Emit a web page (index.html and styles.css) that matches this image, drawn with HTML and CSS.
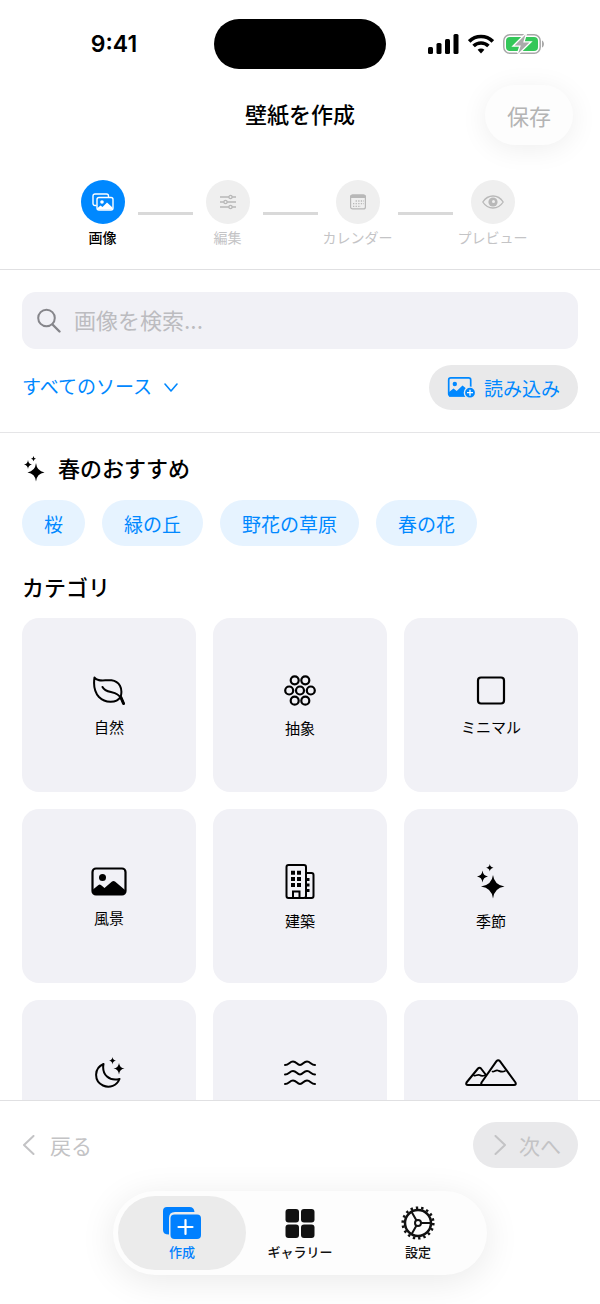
FILE: index.html
```
<!DOCTYPE html>
<html lang="ja">
<head>
    <meta charset="UTF-8">
    <meta name="viewport" content="width=device-width, initial-scale=1.0">
    <title>壁紙を作成</title>
    <link rel="stylesheet" href="styles.css">
</head>
<body>
    <header>
        <div class="status-bar">
            <div class="time">9:41</div>
            <div class="island"></div>
            <div class="status-icons">
                <svg width="31" height="20" viewBox="0 0 31 20">
                    <rect x="0" y="13" width="5" height="7" rx="1.5"/>
                    <rect x="8.5" y="9" width="5" height="11" rx="1.5"/>
                    <rect x="17" y="5" width="5" height="15" rx="1.5"/>
                    <rect x="25.5" y="0" width="5" height="20" rx="1.5"/>
                </svg>
                <svg width="26" height="20" viewBox="0 0 26 20" fill="none" stroke="#000" stroke-width="3.6">
                    <path d="M1.2 7.4a16.8 16.8 0 0 1 23.6 0"/>
                    <path d="M5.6 12a10.6 10.6 0 0 1 14.8 0"/>
                    <path d="M13 19.4l-3.4-3.6a4.9 4.9 0 0 1 6.8 0z" fill="#000" stroke="none"/>
                </svg>
                <svg width="42" height="20" viewBox="0 0 42 20">
                    <rect x="0.8" y="0.8" width="36.4" height="18.4" rx="6" fill="none" stroke="#a8a8a8" stroke-width="1.5"/>
                    <rect x="3" y="3" width="32" height="14" rx="4" fill="#34c759"/>
                    <path d="M39 6.5c2.6 1 2.6 6 0 7z" fill="#a8a8a8"/>
                    <path d="M22.5 0.5L11.5 11.5h6.3l-2.6 8L26.5 8.500h-6.3z" fill="#aaa" stroke="#fff" stroke-width="2.6" paint-order="stroke"/>
                </svg>
            </div>
        </div>
        <div class="nav-bar">
            <h1>壁紙を作成</h1>
            <button class="save" disabled>保存</button>
        </div>
        <ol class="steps">
            <li class="step active">
                <span class="circle">
                    <svg width="22" height="18" viewBox="0 0 22 18" fill="none" stroke="currentColor" stroke-width="1.4">
                        <path d="M4.5 12.5H3a2 2 0 0 1-2-2V3a2 2 0 0 1 2-2h11.5a2 2 0 0 1 2 2v1"/>
                        <rect x="5" y="4.5" width="16" height="12.5" rx="2"/>
                        <circle cx="10" cy="9" r="1.8" fill="currentColor" stroke="none"/>
                        <path d="M5.5 15l3-2.5 2 1.5L15 9.5l5.5 5v2h-15z" fill="currentColor" stroke="none"/>
                    </svg>
                </span>
                <span class="step-label">画像</span>
            </li>
            <li class="line"></li>
            <li class="step">
                <span class="circle">
                    <svg width="18" height="16" viewBox="0 0 18 16" fill="none" stroke="currentColor" stroke-width="1.3">
                        <path d="M1 3h9M13 3h4M1 8h4M8 8h9M1 13h9M13 13h4"/>
                        <circle cx="11.5" cy="3" r="1.6"/>
                        <circle cx="6.5" cy="8" r="1.6"/>
                        <circle cx="11.5" cy="13" r="1.6"/>
                    </svg>
                </span>
                <span class="step-label">編集</span>
            </li>
            <li class="line"></li>
            <li class="step">
                <span class="circle">
                    <svg width="18" height="16" viewBox="0 0 18 16">
                        <rect x="1.6" y="1.1" width="14.8" height="13.8" rx="2" fill="none" stroke="currentColor" stroke-width="1.2"/>
                        <path d="M1 4V3A2.500 2.500 0 0 1 3.500.5h11A2.500 2.500 0 0 1 17 3v1z" fill="currentColor"/>
                        <path d="M6.600 7H15M4 9.700h11M4 12.400h8" fill="none" stroke="currentColor" stroke-width="1.3" stroke-dasharray="1.3 1.3"/>
                    </svg>
                </span>
                <span class="step-label">カレンダー</span>
            </li>
            <li class="line"></li>
            <li class="step">
                <span class="circle">
                    <svg width="22" height="14" viewBox="0 0 22 14">
                        <path d="M.8 7C6-1 16-1 21.2 7 16 15 6 15 .8 7z" fill="none" stroke="currentColor" stroke-width="1.3"/>
                        <circle cx="11" cy="7" r="4.600" fill="currentColor"/>
                        <circle cx="11.500" cy="6.500" r="1.500" fill="#efefef"/>
                    </svg>
                </span>
                <span class="step-label">プレビュー</span>
            </li>
        </ol>
    </header>

    <section class="tools">
        <label class="search">
            <svg width="24" height="25" viewBox="0 0 24 25" fill="none" stroke="#86868b" stroke-width="2">
                <circle cx="9.5" cy="10" r="8.3"/>
                <path d="M15.500 16.500l7 7" stroke-width="2.4" stroke-linecap="round"/>
            </svg>
            <input type="search" placeholder="画像を検索..." aria-label="画像を検索">
        </label>
        <div class="tools-row">
            <label class="source">
                <select aria-label="ソース">
                    <option>すべてのソース</option>
                </select>
                <svg width="14" height="10" viewBox="0 0 14 10" fill="none" stroke="currentColor" stroke-width="1.6" stroke-linecap="round" stroke-linejoin="round">
                    <path d="M1 1l6 7 6-7"/>
                </svg>
            </label>
            <button class="import">
                <svg width="29" height="23" viewBox="0 0 29 23">
                    <rect x="1.7" y="1.9" width="22" height="18" rx="2" fill="none" stroke="currentColor" stroke-width="1.7"/>
                    <circle cx="7.8" cy="8" r="2.2" fill="currentColor"/>
                    <path d="M2 16l4.5-3.5 3.2 2.5 5.8-5.500 8.500 7v4H2z" fill="currentColor"/>
                    <circle cx="23" cy="16.7" r="5.6" fill="currentColor" stroke="#e9e9ea" stroke-width="1.4"/>
                    <path d="M23 13.7v6M20 16.7h6" stroke="#fff" stroke-width="1.3"/>
                </svg>
                読み込み
            </button>
        </div>
    </section>

    <main>
        <h2>
            <svg width="24" height="28" viewBox="0 0 24 28">
                <path d="M14 8q.8 8 8.500 9.500-7.700 1-8.500 9-.8-8-8.500-9Q13.200 16 14 8zM6 5q.4 4 4 4.500Q6.400 10 6 14q-.4-4-4-4.500Q5.600 9 6 5zM11.500 1q.3 2.500 2.500 2.700-2.200.3-2.500 2.600-.3-2.300-2.500-2.600Q11.200 3.500 11.500 1z"/>
            </svg>
            春のおすすめ
        </h2>
        <div class="chips">
            <button>桜</button>
            <button>緑の丘</button>
            <button>野花の草原</button>
            <button>春の花</button>
        </div>
        <h2>カテゴリ</h2>
        <div class="grid">
            <button class="card">
                <svg width="34" height="29" viewBox="0 0 34 29" fill="none" stroke="#000" stroke-width="2" stroke-linecap="round" stroke-linejoin="round">
                    <path d="M2.500 1.500c3 5 11 2 17 2.800 8 1.200 11.500 8 9.200 16.500C24 28 13 27 7 21 2.500 16 1.500 8 2.500 1.500z"/>
                    <path d="M10.500 11c3 6 10 4 15 7.500 3 2 4.500 5 6 8.700"/>
                    <path d="M29 21.500l2.500 6" stroke-width="3"/>
                </svg>
                自然
            </button>
            <button class="card">
                <svg width="32" height="31" viewBox="0 0 32 31" fill="none" stroke="#000" stroke-width="2.2">
                    <circle cx="10.700" cy="5.300" r="4"/>
                    <circle cx="21.300" cy="5.300" r="4"/>
                    <circle cx="5.200" cy="15.500" r="4"/>
                    <circle cx="16" cy="15.500" r="4"/>
                    <circle cx="26.800" cy="15.500" r="4"/>
                    <circle cx="10.700" cy="25.700" r="4"/>
                    <circle cx="21.300" cy="25.700" r="4"/>
                </svg>
                抽象
            </button>
            <button class="card">
                <svg width="30" height="29" viewBox="0 0 30 29" fill="none" stroke="#000" stroke-width="2.2">
                    <rect x="2" y="1.500" width="26" height="26" rx="3"/>
                </svg>
                ミニマル
            </button>
            <button class="card">
                <svg width="36" height="29" viewBox="0 0 36 29">
                    <rect x="1.500" y="1.500" width="33" height="26" rx="3.500" fill="none" stroke="#000" stroke-width="2.2"/>
                    <circle cx="11.500" cy="10.500" r="3.500"/>
                    <path d="M2 22.500l5.500-4.500q1.200-.8 2.400 0l3.600 3 7.500-6.500q1.500-1.200 3 0L34 23v3l-2 2H4l-2-2z"/>
                </svg>
                風景
            </button>
            <button class="card">
                <svg width="30" height="35" viewBox="0 0 30 35" fill="none" stroke="#000" stroke-width="2">
                    <rect x="1.500" y="1" width="19.500" height="33" rx="2"/>
                    <path d="M21 9h5.500a2 2 0 0 1 2 2v21a2 2 0 0 1-2 2H20M8 34v-6.500h6.500V34"/>
                    <path d="M6 8.800h4M12 8.800h4M6 15h4M12 15h4M6 21h4M12 21h4" stroke-width="4"/>
                    <path d="M21 15.500h3.500M21 21h3.500M21 26.500h3.500" stroke-width="3"/>
                </svg>
                建築
            </button>
            <button class="card">
                <svg width="30" height="35" viewBox="0 0 30 35">
                    <path d="M17 11q1.200 10 11.500 11.500Q18.200 24 17 34.500 15.800 24 5 22.500 15.800 21 17 11zM6.500 6.500q.6 5.300 5.500 6-4.900.7-5.500 6-.6-5.300-5.500-6 4.900-.7 5.500-6zM13.800 0q.4 3.300 3.700 3.700-3.300.5-3.700 3.800-.4-3.300-3.700-3.800Q13.400 3.300 13.800 0z"/>
                </svg>
                季節
            </button>
            <button class="card">
                <svg width="36" height="31" viewBox="-4 0 36 31">
                    <path d="M8.500 7C-1 11-1.500 24 8 28.500c6.500 3 14 0 16.500-6.500C14.500 24.500 6.500 18 8.500 7z" fill="none" stroke="#000" stroke-width="2" stroke-linejoin="round"/>
                    <path d="M24 6q.7 5 5.500 5.500-4.800.6-5.500 6-.7-5.400-5.500-6Q23.300 11 24 6zM17.500 0q.4 3.200 3.500 3.600-3.100.4-3.500 3.800-.4-3.400-3.500-3.800 3.100-.4 3.500-3.600z"/>
                </svg>
                夜空
            </button>
            <button class="card">
                <svg width="32" height="25" viewBox="0 0 32 25" fill="none" stroke="#000" stroke-width="2" stroke-linecap="round">
                    <path d="M1 5c4 0 4.500-3.500 8-3.500s4 3.500 7 3.500 3.500-3.500 7-3.500 4 3.500 8 3.500"/>
                    <path d="M1 14.500c4 0 4.500-3.500 8-3.500s4 3.500 7 3.500 3.500-3.500 7-3.500 4 3.500 8 3.500"/>
                    <path d="M1 24c4 0 4.500-3.500 8-3.500s4 3.500 7 3.500 3.500-3.500 7-3.500 4 3.500 8 3.500"/>
                </svg>
                海
            </button>
            <button class="card">
                <svg width="52" height="27" viewBox="0 0 52 27" fill="none" stroke="#000" stroke-width="2" stroke-linejoin="round" stroke-linecap="round">
                    <path d="M31.500 2.200q1.700-2 3.400 0L50.500 23.500q1 2.500-1.500 2.500H18q-2.500 0-1.500-2.500z"/>
                    <path d="M21 16l-5-6.500q-1.500-1.500-3 0L1.500 23.500Q.5 26 3 26h15"/>
                    <path d="M27.500 12.500c2 .5 3-2 5.500-1s4 2 7 .5M9 16.500c2 1 3-1.500 5.500-.5 1.500 1 3 1.200 5 .5" stroke-width="1.7"/>
                </svg>
                山
            </button>
        </div>
    </main>

    <footer>
        <div class="pager">
            <button class="back" disabled>
                <svg width="14" height="20" viewBox="0 0 14 20"><path d="M11.500 1L2 10l9.500 9"/></svg>
                戻る
            </button>
            <button class="next" disabled>
                <svg width="14" height="20" viewBox="0 0 14 20"><path d="M2.500 1L12 10l-9.500 9"/></svg>
                次へ
            </button>
        </div>
        <nav class="tab-bar">
            <a href="#create" class="tab selected">
                <svg width="40" height="34" viewBox="0 0 40 34">
                    <path d="M5 1h22.500q4.500 0 5 5H13q-6 0-6 6v16.500Q1 28.500 1 24V5q0-4 4-4z"/>
                    <rect x="8.500" y="8.500" width="30.500" height="24.500" rx="4"/>
                    <path d="M23.500 14v14M16.500 21h14" stroke="#fff" stroke-width="2.2" stroke-linecap="round"/>
                </svg>
                作成
            </a>
            <a href="#gallery" class="tab">
                <svg width="30" height="34" viewBox="0 0 30 34">
                    <rect x="0.5" y="3" width="13.5" height="13.5" rx="3"/>
                    <rect x="16" y="3" width="13.5" height="13.5" rx="3"/>
                    <rect x="0.5" y="18.500" width="13.5" height="13.5" rx="3"/>
                    <rect x="16" y="18.500" width="13.5" height="13.5" rx="3"/>
                </svg>
                ギャラリー
            </a>
            <a href="#settings" class="tab">
                <svg width="34" height="34" viewBox="0 0 34 34" fill="none" stroke="currentColor">
                    <circle cx="17" cy="17" r="13" stroke-width="2.5"/>
                    <circle cx="17" cy="17" r="15.3" stroke-width="2.6" stroke-dasharray="2.4 2.94"/>
                    <circle cx="17" cy="17" r="3" stroke-width="2"/>
                    <path d="M20 17h10M15.500 14.400l-5-8.600M15.500 19.600l-5 8.600" stroke-width="2"/>
                </svg>
                設定
            </a>
        </nav>
    </footer>
</body>
</html>
```
FILE: styles.css
```
* {
    box-sizing: border-box;
}

body {
    margin: 0;
    height: 100vh;
    display: flex;
    flex-direction: column;
    background-color: #fff;
    color: #000;
    font-family: Inter, "Noto Sans CJK JP", sans-serif;
}

button,
input,
select {
    font-family: inherit;
    border: none;
    padding: 0;
    background: none;
}

svg {
    display: block;
    flex: none;
}

h1,
h2 {
    margin: 0;
    font-size: 22px;
    line-height: 28px;
    font-weight: 500;
}

header {
    border-bottom: 1px solid #e0e0e2;
}

.status-bar {
    display: grid;
    grid-template-columns: 1fr 172px 1fr;
    justify-items: center;
    align-items: center;
    padding: 19px 14px 16px;
}

.time {
    font-size: 23px;
    font-weight: 600;
}

.island {
    width: 100%;
    height: 50px;
    border-radius: 25px;
    background-color: #000;
}

.status-icons {
    display: flex;
    gap: 9px;
}

.nav-bar {
    display: grid;
    grid-template-columns: 1fr auto 1fr;
    align-items: center;
    padding: 0 27px;
}

.nav-bar h1 {
    grid-column: 2;
}

.save {
    justify-self: end;
    width: 88px;
    height: 60px;
    border-radius: 30px;
    background-color: #fdfdfd;
    box-shadow: 0 4px 28px rgba(0, 0, 0, 0.07);
    font-size: 22px;
    color: #b4b4b4;
}

.steps {
    display: flex;
    justify-content: center;
    align-items: center;
    gap: 5px;
    list-style: none;
    margin: 0;
    padding: 35px 0 22px;
}

.step {
    display: flex;
    flex-direction: column;
    align-items: center;
    gap: 5px;
    min-width: 60px;
    color: #b8b8b8;
}

.circle {
    display: flex;
    justify-content: center;
    align-items: center;
    width: 44px;
    height: 44px;
    border-radius: 50%;
    background-color: #efefef;
}

.step-label {
    font-size: 14px;
    line-height: 18px;
    color: #c4c4c6;
}

.active .circle {
    background-color: #0088ff;
    color: #fff;
}

.active .step-label {
    color: #000;
    font-weight: 500;
}

.line {
    width: 55px;
    height: 3px;
    background-color: #d9d9d9;
}

.tools {
    display: flex;
    flex-direction: column;
    gap: 16px;
    padding: 22px;
    border-bottom: 1px solid #e5e5e7;
}

.search {
    display: flex;
    align-items: center;
    gap: 13px;
    height: 57px;
    padding: 0 15px;
    border-radius: 14px;
    background-color: #f1f1f6;
}

.search input {
    flex: 1;
    min-width: 0;
    font-size: 22px;
    outline: none;
}

.search input::placeholder {
    color: #bcbcc0;
}

.tools-row {
    display: flex;
    justify-content: space-between;
    align-items: center;
}

.source {
    display: flex;
    align-items: center;
    gap: 8px;
    color: #0088ff;
}

.source select {
    appearance: none;
    font-size: 19px;
    color: inherit;
}

.import {
    display: flex;
    align-items: center;
    gap: 8px;
    height: 45px;
    padding: 0 18px;
    border-radius: 23px;
    background-color: #e9e9ea;
    font-size: 19px;
    color: #0088ff;
}

main {
    flex: 1;
    min-height: 0;
    overflow: hidden;
    padding: 22px 22px 0;
}

main h2 {
    display: flex;
    align-items: center;
    gap: 12px;
}

.chips {
    display: flex;
    gap: 17px;
    margin: 17px 0 28px;
}

.chips button {
    height: 46px;
    padding: 0 22px;
    border-radius: 23px;
    background-color: #e6f3ff;
    font-size: 19px;
    color: #0088ff;
}

.grid {
    display: grid;
    grid-template-columns: repeat(3, 1fr);
    gap: 17px;
    margin-top: 16px;
}

.card {
    display: flex;
    flex-direction: column;
    justify-content: center;
    align-items: center;
    gap: 14px;
    aspect-ratio: 1;
    padding-top: 2px;
    border-radius: 17px;
    background-color: #f1f1f6;
    font-size: 15px;
    line-height: 18px;
    color: #000;
}

footer {
    border-top: 1px solid #e0e0e2;
    padding: 21px 22px 29px;
}

.pager {
    display: flex;
    justify-content: space-between;
    margin-bottom: 23px;
}

.pager button {
    display: flex;
    align-items: center;
    gap: 14px;
    height: 46px;
    font-size: 21px;
    color: #c3c3c5;
}

.pager svg {
    fill: none;
    stroke: currentColor;
    stroke-width: 2;
    stroke-linecap: round;
    stroke-linejoin: round;
}

.pager .next {
    gap: 12px;
    padding: 0 17px 0 20px;
    border-radius: 23px;
    background-color: #e9e9eb;
}

.tab-bar {
    display: flex;
    width: fit-content;
    margin: 0 auto;
    padding: 5px;
    border-radius: 42px;
    background-color: #fdfdfd;
    box-shadow: 0 6px 36px rgba(0, 0, 0, 0.09);
}

.tab {
    display: flex;
    flex-direction: column;
    align-items: center;
    gap: 3px;
    width: 128px;
    padding: 10px 0 8px;
    border-radius: 37px;
    font-size: 13px;
    line-height: 19px;
    font-weight: 500;
    color: #111;
    text-decoration: none;
}

/* tabs overlap a little so the selected pill can be wider than its share */
.tab + .tab {
    margin-left: -10px;
}

.tab svg {
    fill: currentColor;
}

.tab svg[fill="none"] {
    fill: none;
}

.selected {
    background-color: #ebebeb;
    color: #0080ff;
}
```
